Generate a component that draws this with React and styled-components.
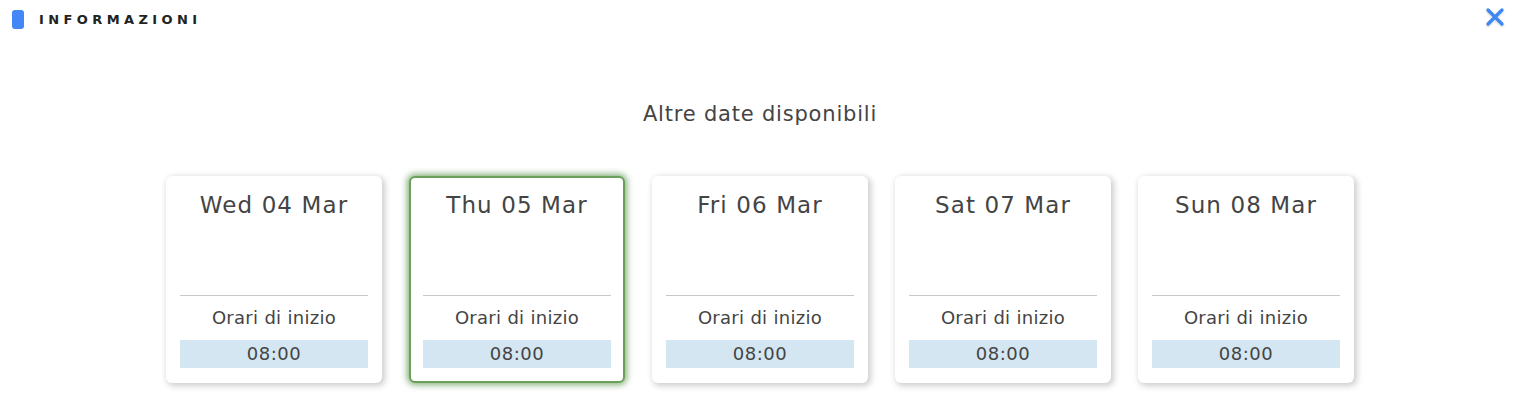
import React from 'react'
import styled, { createGlobalStyle } from 'styled-components'

const GlobalStyle = createGlobalStyle`
  body {
    margin: 0;
    background: #fff;
    font-family: "DejaVu Sans", "Open Sans", sans-serif;
    color: #333;
  }
`

const dates = [
  { label: 'Wed 04 Mar', time: '08:00' },
  { label: 'Thu 05 Mar', time: '08:00', selected: true },
  { label: 'Fri 06 Mar', time: '08:00' },
  { label: 'Sat 07 Mar', time: '08:00' },
  { label: 'Sun 08 Mar', time: '08:00' },
]

const App = () => {
  return (
    <>
      <GlobalStyle />
      <Page>
        <Header>
          <TitleWrapper>
            <Marker />
            <Title>INFORMAZIONI</Title>
          </TitleWrapper>
          <CloseButton aria-label="close">
            <svg width="20" height="20" viewBox="0 0 20 20">
              <path d="M3 3 L17 17 M17 3 L3 17" stroke="#3f86f5" strokeWidth="3.2" strokeLinecap="round" fill="none" />
            </svg>
          </CloseButton>
        </Header>
        <Heading>Altre date disponibili</Heading>
        <CardRow>
          {dates.map((d) => (
            <Card key={d.label} selected={d.selected}>
              <DateLabel>{d.label}</DateLabel>
              <Divider />
              <StartLabel>Orari di inizio</StartLabel>
              <TimeSlot>{d.time}</TimeSlot>
            </Card>
          ))}
        </CardRow>
      </Page>
    </>
  )
}

const Page = styled.div`
  width: 1520px;
  height: 404px;
  overflow: hidden;
`

const Header = styled.div`
  display: flex;
  justify-content: space-between;
  align-items: center;
  height: 38px;
  padding: 0 14px 0 12px;
`

const TitleWrapper = styled.div`
  display: flex;
  align-items: center;
  gap: 15px;
`

const Marker = styled.div`
  width: 12px;
  height: 19px;
  border-radius: 3px;
  background: #4287f5;
`

const Title = styled.div`
  font-size: 13px;
  font-weight: 700;
  letter-spacing: 4.4px;
  color: #222;
`

const CloseButton = styled.div`
  width: 22px;
  height: 22px;
  display: flex;
  align-items: center;
  justify-content: center;
  margin-top: -4px;
  filter: drop-shadow(0 1px 1px rgba(0, 0, 0, 0.2));
`

const Heading = styled.div`
  text-align: center;
  font-size: 21px;
  letter-spacing: 0.8px;
  line-height: 28px;
  color: #444;
  margin-top: 62px;
  margin-bottom: 48px;
`

const CardRow = styled.div`
  display: flex;
  justify-content: center;
  gap: 27px;
`

const Card = styled.div`
  width: 216px;
  height: 207px;
  box-sizing: border-box;
  border-radius: 6px;
  background: #fff;
  padding: 12px 12px 13px;
  display: flex;
  flex-direction: column;
  border: 2px solid ${({ selected }) => (selected ? '#6aa05a' : 'transparent')};
  box-shadow: ${({ selected }) =>
    selected ? '0 0 6px 2px rgba(95, 150, 80, 0.75)' : '2px 2px 6px 1px rgba(0, 0, 0, 0.2)'};
`

const DateLabel = styled.div`
  text-align: center;
  font-size: 23px;
  letter-spacing: 1.1px;
  color: #444;
  line-height: 30px;
`

const Divider = styled.div`
  margin-top: auto;
  height: 1px;
  background: #c8c8c8;
`

const StartLabel = styled.div`
  text-align: center;
  font-size: 18px;
  letter-spacing: 0.3px;
  color: #444;
  margin-top: 10px;
  line-height: 24px;
`

const TimeSlot = styled.div`
  margin-top: 10px;
  height: 28px;
  line-height: 28px;
  text-align: center;
  font-size: 18px;
  letter-spacing: 0.5px;
  color: #444;
  background: #d4e6f2;
`

export default App
